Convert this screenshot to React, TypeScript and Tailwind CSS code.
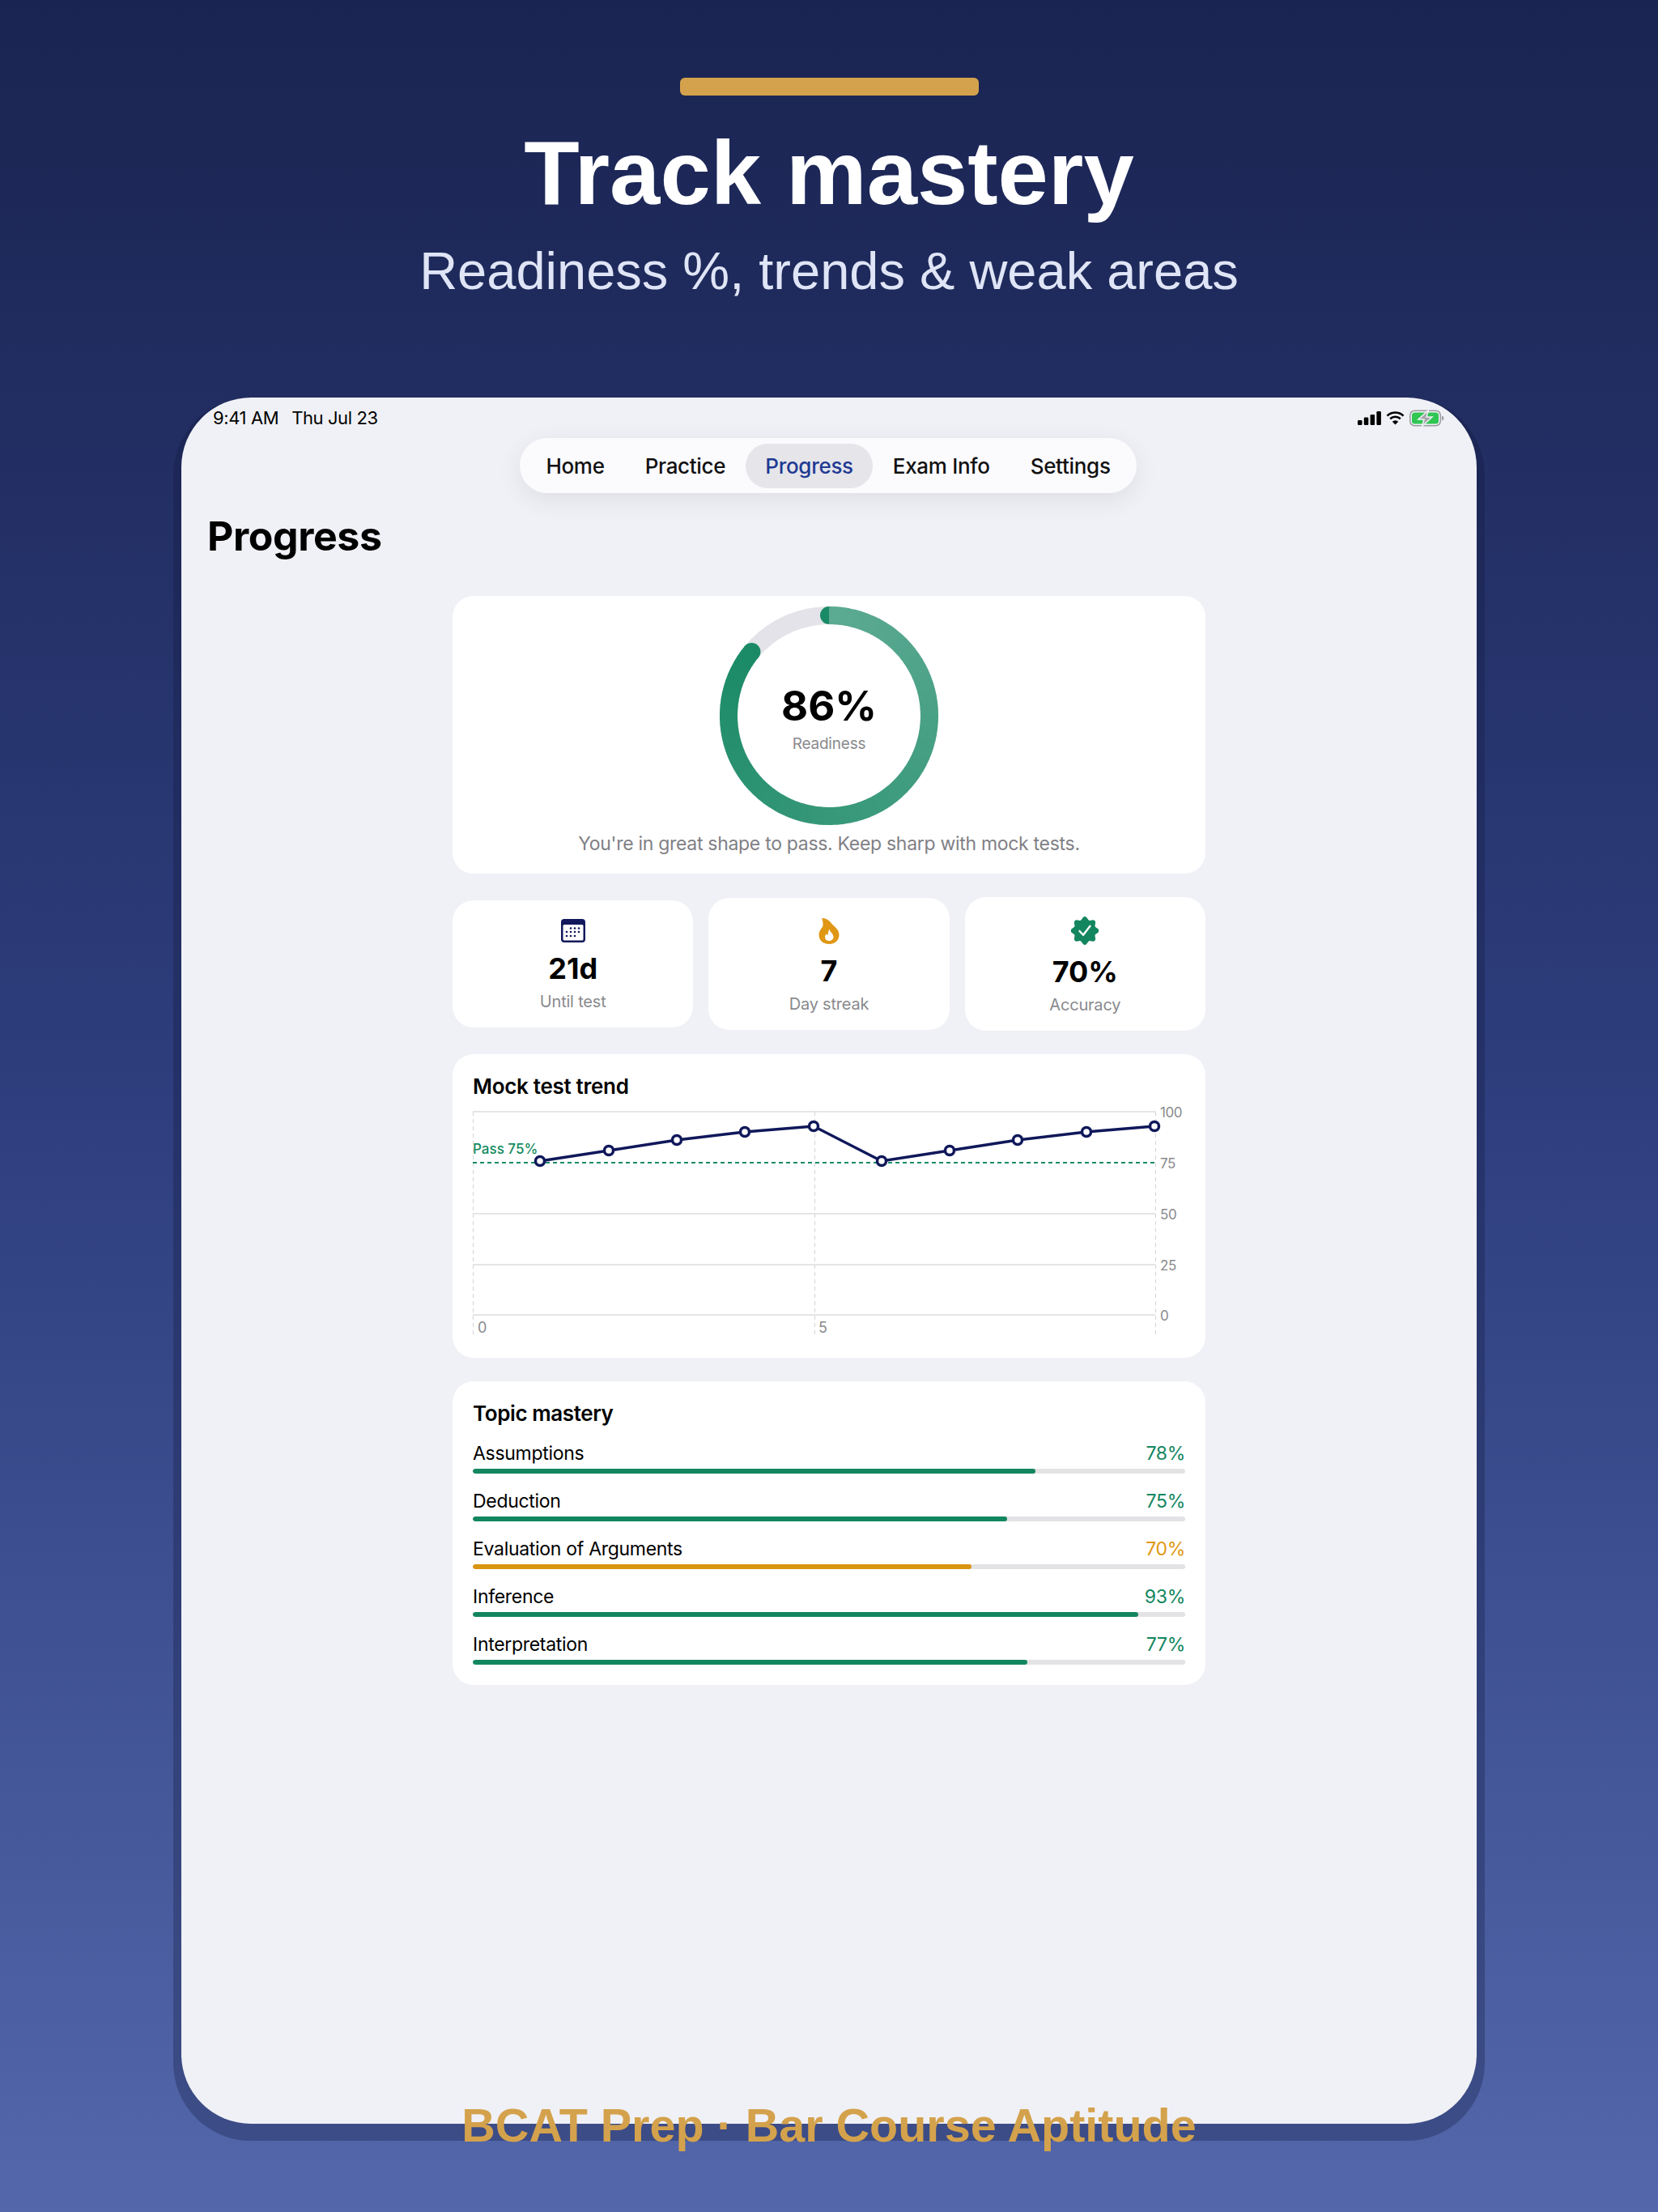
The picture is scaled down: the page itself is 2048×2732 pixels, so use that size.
import React from 'react';

const navItems = ['Home', 'Practice', 'Progress', 'Exam Info', 'Settings'];

const topics = [
  { name: 'Assumptions', label: '78%', pct: 79, warn: false },
  { name: 'Deduction', label: '75%', pct: 75, warn: false },
  { name: 'Evaluation of Arguments', label: '70%', pct: 70, warn: true },
  { name: 'Inference', label: '93%', pct: 93.4, warn: false },
  { name: 'Interpretation', label: '77%', pct: 77.8, warn: false },
];

const trend = [
  [83, 69],
  [168, 56],
  [252, 43],
  [336, 33],
  [421, 26],
  [505, 69],
  [589, 56],
  [673, 43],
  [758, 33],
  [842, 26],
];

const mix = (t: number) => {
  const from = [92, 170, 146];
  const to = [26, 138, 102];
  return `rgb(${from.map((c, i) => Math.round(c + (to[i] - c) * t)).join(',')})`;
};

const Ring: React.FC = () => {
  const r = 124;
  const c = 135;
  const point = (deg: number) => {
    const a = (deg * Math.PI) / 180;
    return [c + r * Math.sin(a), c - r * Math.cos(a)];
  };
  const end = 0.86 * 360;
  const steps = 90;
  const [sx, sy] = point(0);
  const [ex, ey] = point(end);
  return (
    <svg width="270" height="270" viewBox="0 0 270 270" className="block">
      <circle cx={c} cy={c} r={r} fill="none" stroke="#e3e3e9" strokeWidth="22" />
      <circle cx={sx} cy={sy} r="11" fill="#1a8a66" />
      <circle cx={ex} cy={ey} r="11" fill="#1a8a66" />
      {Array.from({ length: steps }).map((_, i) => {
        const [x1, y1] = point((end * i) / steps);
        const [x2, y2] = point((end * (i + 1)) / steps + 0.4);
        return (
          <path
            key={i}
            d={`M${x1} ${y1}A${r} ${r} 0 0 1 ${x2} ${y2}`}
            fill="none"
            stroke={mix(i / steps)}
            strokeWidth="22"
          />
        );
      })}
    </svg>
  );
};

const CalendarIcon: React.FC = () => (
  <svg width="30" height="29" viewBox="0 0 30 29" className="block">
    <rect x="0" y="0" width="30" height="29" rx="4" fill="#12195c" />
    <rect x="2.500" y="7" width="25" height="19.500" rx="1.500" fill="#fff" />
    {[
      [12, 11.5],
      [17, 11.5],
      [22, 11.5],
      [7, 16],
      [12, 16],
      [17, 16],
      [22, 16],
      [7, 21],
      [12, 21],
      [17, 21],
    ].map(([x, y], i) => (
      <circle key={i} cx={x} cy={y} r="1.300" fill="#12195c" />
    ))}
  </svg>
);

const FlameIcon: React.FC = () => (
  <svg width="26" height="35" viewBox="0 -1 26 35" className="block">
    <path
      d="M4 1C11 1.500 13 4 16.500 8C21 12.500 25.500 15.500 25.500 21.500C25.500 28.500 20 33 13 33C5.500 33 0.500 28 0.500 21.500C0.500 17.500 2.500 15 4.500 12.500C6 10.500 6 5.500 4 1Z"
      fill="#df9714"
    />
    <path
      d="M13.500 14.500C14 18 18.500 20 18.500 24.500C18.500 27 16 29 13 29C10 29 8 27 8 24.500C8 22.500 9 21 10 20.500C10.500 21.500 11 22 11.500 22C12 19.500 12 17 13.500 14.500Z"
      fill="#fff"
    />
  </svg>
);

// scalloped seal, one bump per 45 degrees
const sealPath = () => {
  const pts: string[] = [];
  for (let i = 0; i < 96; i++) {
    const a = (i / 96) * Math.PI * 2;
    const rad = 15.6 + 1.9 * Math.cos(8 * a);
    pts.push(`${(17 + rad * Math.sin(a)).toFixed(2)} ${(17.5 - rad * Math.cos(a)).toFixed(2)}`);
  }
  return `M${pts.join('L')}Z`;
};

const SealIcon: React.FC = () => (
  <svg width="34" height="37" viewBox="0 -1 34 37" className="block">
    <path d={sealPath()} fill="#138660" />
    <path d="M10.500 18l4.500 4.800 8.500-11" fill="none" stroke="#fff" strokeWidth="2.400" strokeLinecap="round" strokeLinejoin="round" />
  </svg>
);

const StatusIcons: React.FC = () => (
  <div className="flex items-center gap-[6px]">
    <svg width="29" height="17" viewBox="0 0 29 17" className="block">
      <rect x="0" y="11" width="5.500" height="6" rx="1.200" fill="#000" />
      <rect x="7.800" y="7.500" width="5.500" height="9.500" rx="1.200" fill="#000" />
      <rect x="15.600" y="4" width="5.500" height="13" rx="1.200" fill="#000" />
      <rect x="23.400" y="0" width="5.500" height="17" rx="1.200" fill="#000" />
    </svg>
    <svg width="23" height="17" viewBox="0 0 23 17" className="block">
      <path d="M1.500 5.600a14.400 14.400 0 0 1 20 0" fill="none" stroke="#000" strokeWidth="2.600" />
      <path d="M5.200 9.300a9.200 9.200 0 0 1 12.600 0" fill="none" stroke="#000" strokeWidth="2.600" />
      <path d="M11.500 16.600l-3.700-3.900a5.300 5.300 0 0 1 7.400 0z" fill="#000" />
    </svg>
    <svg width="43" height="21" viewBox="0 0 43 21" className="block">
      <rect x="0.750" y="1.250" width="37.500" height="18.500" rx="5.500" fill="none" stroke="#9a9a9f" strokeWidth="1.500" />
      <rect x="3" y="3.500" width="33" height="14" rx="3.500" fill="#2fc653" />
      <path d="M40 7.500c1.600.5 2.400 1.600 2.400 3s-.8 2.500-2.400 3z" fill="#9a9a9f" />
      <path d="M23.500 0.500L11 12h7l-2.500 8.500L28 9h-7z" fill="#a5a5aa" stroke="#f0f1f6" strokeWidth="1.500" />
    </svg>
  </div>
);

const TrendChart: React.FC = () => (
  <svg width="880" height="285" viewBox="0 0 880 285" className="block mt-[7px] font-['Inter',sans-serif]">
    {[0, 422, 843].map((x) => (
      <line key={x} x1={x + 0.5} y1="8" x2={x + 0.5} y2="283" stroke="#d4d4d8" strokeWidth="1" strokeDasharray="5 4" />
    ))}
    {[8, 134, 197, 259].map((y) => (
      <line key={y} x1="0" y1={y} x2="843" y2={y} stroke="#dcdce0" strokeWidth="1.500" />
    ))}
    <line x1="0" y1="71" x2="843" y2="71" stroke="#1a8a66" strokeWidth="2" strokeDasharray="5 4" />
    <text x="0" y="60" fontSize="17" fontWeight="500" fill="#138a5f">Pass 75%</text>
    {[['100', 8], ['75', 71], ['50', 134], ['25', 197], ['0', 259]].map(([t, y]) => (
      <text key={t} x="849" y={Number(y) + 7} fontSize="17" letterSpacing="-0.4" fill="#8a8a8e">{t}</text>
    ))}
    <text x="6" y="281" fontSize="18" fill="#8a8a8e">0</text>
    <text x="427" y="281" fontSize="18" fill="#8a8a8e">5</text>
    <polyline points={trend.map((p) => p.join(',')).join(' ')} fill="none" stroke="#10185a" strokeWidth="3.500" />
    {trend.map(([x, y]) => (
      <circle key={x} cx={x} cy={y} r="5.500" fill="#fff" stroke="#10185a" strokeWidth="3.500" />
    ))}
  </svg>
);

const App: React.FC = () => {
  const stats = [
    { icon: <CalendarIcon />, value: '21d', label: 'Until test' },
    { icon: <FlameIcon />, value: '7', label: 'Day streak' },
    { icon: <SealIcon />, value: '70%', label: 'Accuracy' },
  ];

  return (
    <div className="relative w-[2048px] h-[2732px] overflow-hidden bg-gradient-to-b from-[#1a2451] via-[#2e3e7e] to-[#5367aa] font-['Liberation_Sans',sans-serif]">
      {/* Marketing header */}
      <div className="flex flex-col items-center pt-[96px] h-[491px]">
        <div className="w-[369px] h-[22px] rounded-[6px] bg-[#d4a24c]" />
        <h1 className="mt-[31px] text-[112px] leading-[130px] font-bold text-white">Track mastery</h1>
        <p className="mt-[16px] text-[65px] leading-[80px] text-[#dfe5f6]">Readiness %, trends &amp; weak areas</p>
      </div>

      {/* Device */}
      <div className="mx-auto w-[1620px] px-[10px] pb-[21px] rounded-[96px] bg-[#10183c]/30">
        <div className="h-[2132px] rounded-[86px] bg-[#f0f1f6] font-['Inter',sans-serif] text-black">
          <div className="flex items-center justify-between h-[50px] pl-[39px] pr-[40px]">
            <div className="flex gap-[16px] text-[22px] tracking-[-0.4px] text-black">
              <span>9:41 AM</span>
              <span>Thu Jul 23</span>
            </div>
            <StatusIcons />
          </div>

          <div className="flex justify-center pr-[2px]">
            <div className="flex items-center h-[68px] px-[7px] rounded-full bg-[#fbfbfe] shadow-[0_8px_32px_rgba(0,0,0,0.08)] text-[26px] tracking-[-0.3px] font-medium text-[#111]">
              {navItems.map((item) => (
                <span
                  key={item}
                  className={
                    item === 'Progress'
                      ? 'flex items-center h-[55px] px-[24px] rounded-full bg-[#e5e5ea] text-[#1f3a93]'
                      : 'flex items-center h-[55px] px-[25px]'
                  }
                >
                  {item}
                </span>
              ))}
            </div>
          </div>

          <h2 className="mt-[22px] ml-[32px] text-[50px] leading-[62px] font-bold tracking-[-0.4px]">Progress</h2>

          <div className="mt-[43px] mx-auto w-[930px] flex flex-col gap-[29px]">
            <div className="relative flex flex-col items-center h-[343px] pt-[13px] rounded-[26px] bg-white">
              <Ring />
              <div className="absolute top-[108px] flex flex-col items-center">
                <span className="text-[51px] leading-[56px] font-bold">86%</span>
                <span className="mt-[7px] text-[19px] leading-[24px] tracking-[-0.2px] text-[#8a8a8e]">Readiness</span>
              </div>
              <p className="mt-[8px] text-[23px] leading-[30px] tracking-[-0.3px] text-[#808085]">You're in great shape to pass. Keep sharp with mock tests.</p>
            </div>

            <div className="grid grid-cols-3 gap-[19px] items-center">
              {stats.map((s) => (
                <div key={s.label} className="flex flex-col items-center pt-[23px] pb-[20px] rounded-[26px] bg-white">
                  {s.icon}
                  <span className="mt-[10px] text-[36px] leading-[44px] font-bold">{s.value}</span>
                  <span className="mt-[7px] text-[20px] leading-[24px] tracking-[-0.2px] text-[#8a8a8e]">{s.label}</span>
                </div>
              ))}
            </div>

            <div className="h-[375px] pt-[24px] px-[25px] rounded-[26px] bg-white">
              <h3 className="text-[26px] leading-[32px] font-semibold tracking-[-0.3px]">Mock test trend</h3>
              <TrendChart />
            </div>

            <div className="h-[375px] pt-[24px] px-[25px] rounded-[26px] bg-white">
              <h3 className="text-[26px] leading-[32px] font-semibold tracking-[-0.4px]">Topic mastery</h3>
              <div className="mt-[18px] flex flex-col gap-[19px]">
                {topics.map((t) => (
                  <div key={t.name}>
                    <div className="flex justify-between text-[23px] leading-[30px] tracking-[-0.3px]">
                      <span>{t.name}</span>
                      <span className={t.warn ? 'text-[#df9714]' : 'text-[#138660]'}>{t.label}</span>
                    </div>
                    <div className="mt-[4px] h-[6px] rounded-full bg-[#e3e3e6] overflow-hidden">
                      <div
                        className={t.warn ? 'h-full rounded-full bg-[#d99411]' : 'h-full rounded-full bg-[#138660]'}
                        style={{ width: `${t.pct}%` }}
                      />
                    </div>
                  </div>
                ))}
              </div>
            </div>
          </div>
        </div>
      </div>

      {/* App name, sits over the device edge */}
      <div className="absolute left-0 right-0 top-[2590px] text-center text-[57.5px] leading-[70px] font-bold text-[#d4a24c]">
        BCAT Prep · Bar Course Aptitude
      </div>
    </div>
  );
};

export default App;
